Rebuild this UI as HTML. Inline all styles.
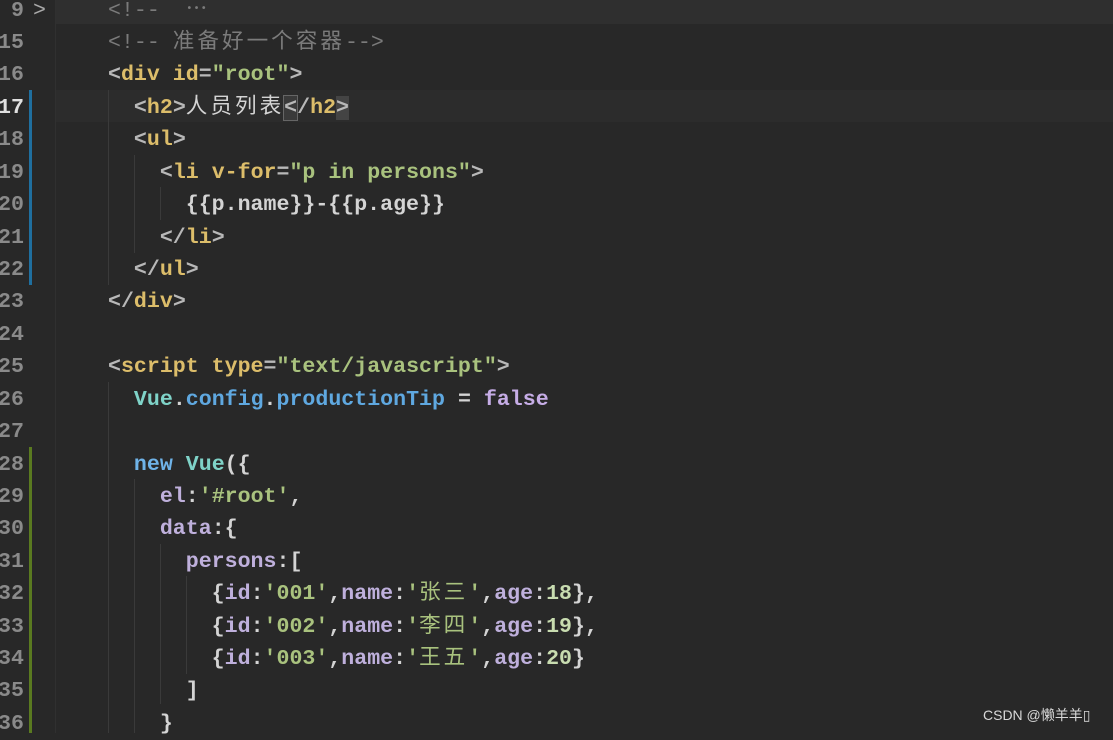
<!DOCTYPE html>
<html><head><meta charset="utf-8"><style>
body{margin:0;width:1113px;height:733px;background:#282828;overflow:hidden;position:relative;font-family:"Liberation Mono","Noto Sans CJK SC",monospace;font-size:21.6px;font-weight:bold;}
.l{position:absolute;left:0;height:32px;line-height:32px;white-space:pre;color:#d4d4d4;margin-top:2px}
.n{position:absolute;width:24px;text-align:right;color:#8a8a8a;}
.t{position:absolute;left:108px;}
.p{color:#b8b8b8}.g{color:#dcbd6a}.s{color:#a9c27e}.c{color:#7b7b7b;font-weight:normal}
.k{color:#6fb3e8}.v{color:#7fd3c8}.b{color:#5fa8e0}.f{color:#c6ade6}.pr{color:#bfb0dc}.num{color:#c8dcb0}
.z{letter-spacing:3px;font-weight:normal}
.hl{position:absolute;left:55px;right:0;background:#2f2f2f}
.ig{position:absolute;width:1px;background:#3a3a3a}
</style></head><body>
<div class="hl" style="top:-7px;height:31px"></div>
<div class="hl" style="top:90px;height:32px;background:#2c2c2c"></div>
<div style="position:absolute;left:29px;top:90px;width:3px;height:195px;background:#1f6f9f"></div>
<div style="position:absolute;left:29px;top:447px;width:3px;height:286px;background:#5a7a20"></div>
<div class="ig" style="left:55px;top:0;height:733px;background:#303030"></div>
<div class="ig" style="left:108px;top:90px;height:195px"></div>
<div class="ig" style="left:134px;top:155px;height:98px"></div>
<div class="ig" style="left:160px;top:187px;height:33px"></div>
<div class="ig" style="left:108px;top:382px;height:351px"></div>
<div class="ig" style="left:134px;top:479px;height:254px"></div>
<div class="ig" style="left:160px;top:544px;height:160px"></div>
<div class="ig" style="left:186px;top:576px;height:98px"></div>

<div class="l" style="top:-7px"><span class="n" style="left:0">9</span><span class="n" style="left:22px;color:#aaa;font-weight:normal">&gt;</span><span class="t c">&lt;!--  ⋯</span></div>
<div class="l" style="top:25px"><span class="n" style="left:-2px">15</span><span class="t c">&lt;!-- <span class="z">准备好一个容器</span>--&gt;</span></div>
<div class="l" style="top:57px"><span class="n" style="left:-2px">16</span><span class="t"><span class="p">&lt;</span><span class="g">div id</span><span class="p">=</span><span class="s">"root"</span><span class="p">&gt;</span></span></div>
<div class="l" style="top:90px"><span class="n" style="left:-2px;color:#e0e0e0">17</span><span class="t">  <span class="p">&lt;</span><span class="g">h2</span><span class="p">&gt;</span><span class="z">人员列表</span><span class="p" style="outline:1px solid #666;background:#3a3a3a">&lt;</span><span class="p">/</span><span class="g">h2</span><span class="p" style="background:#444">&gt;</span></span></div>
<div class="l" style="top:122px"><span class="n" style="left:-2px">18</span><span class="t">  <span class="p">&lt;</span><span class="g">ul</span><span class="p">&gt;</span></span></div>
<div class="l" style="top:155px"><span class="n" style="left:-2px">19</span><span class="t">    <span class="p">&lt;</span><span class="g">li v-for</span><span class="p">=</span><span class="s">"p in persons"</span><span class="p">&gt;</span></span></div>
<div class="l" style="top:187px"><span class="n" style="left:-2px">20</span><span class="t">      {{p.name}}-{{p.age}}</span></div>
<div class="l" style="top:220px"><span class="n" style="left:-2px">21</span><span class="t">    <span class="p">&lt;/</span><span class="g">li</span><span class="p">&gt;</span></span></div>
<div class="l" style="top:252px"><span class="n" style="left:-2px">22</span><span class="t">  <span class="p">&lt;/</span><span class="g">ul</span><span class="p">&gt;</span></span></div>
<div class="l" style="top:284px"><span class="n" style="left:-2px">23</span><span class="t"><span class="p">&lt;/</span><span class="g">div</span><span class="p">&gt;</span></span></div>
<div class="l" style="top:317px"><span class="n" style="left:-2px">24</span></div>
<div class="l" style="top:349px"><span class="n" style="left:-2px">25</span><span class="t"><span class="p">&lt;</span><span class="g">script type</span><span class="p">=</span><span class="s">"text/javascript"</span><span class="p">&gt;</span></span></div>
<div class="l" style="top:382px"><span class="n" style="left:-2px">26</span><span class="t">  <span class="v">Vue</span>.<span class="b">config</span>.<span class="b">productionTip</span> = <span class="f">false</span></span></div>
<div class="l" style="top:414px"><span class="n" style="left:-2px">27</span></div>
<div class="l" style="top:447px"><span class="n" style="left:-2px">28</span><span class="t">  <span class="k">new</span> <span class="v">Vue</span>({</span></div>
<div class="l" style="top:479px"><span class="n" style="left:-2px">29</span><span class="t">    <span class="pr">el</span>:<span class="s">'#root'</span>,</span></div>
<div class="l" style="top:511px"><span class="n" style="left:-2px">30</span><span class="t">    <span class="pr">data</span>:{</span></div>
<div class="l" style="top:544px"><span class="n" style="left:-2px">31</span><span class="t">      <span class="pr">persons</span>:[</span></div>
<div class="l" style="top:576px"><span class="n" style="left:-2px">32</span><span class="t">        {<span class="pr">id</span>:<span class="s">'001'</span>,<span class="pr">name</span>:<span class="s">'<span class="z">张三</span>'</span>,<span class="pr">age</span>:<span class="num">18</span>},</span></div>
<div class="l" style="top:609px"><span class="n" style="left:-2px">33</span><span class="t">        {<span class="pr">id</span>:<span class="s">'002'</span>,<span class="pr">name</span>:<span class="s">'<span class="z">李四</span>'</span>,<span class="pr">age</span>:<span class="num">19</span>},</span></div>
<div class="l" style="top:641px"><span class="n" style="left:-2px">34</span><span class="t">        {<span class="pr">id</span>:<span class="s">'003'</span>,<span class="pr">name</span>:<span class="s">'<span class="z">王五</span>'</span>,<span class="pr">age</span>:<span class="num">20</span>}</span></div>
<div class="l" style="top:673px"><span class="n" style="left:-2px">35</span><span class="t">      ]</span></div>
<div class="l" style="top:706px"><span class="n" style="left:-2px">36</span><span class="t">    }</span></div>
<div style="position:absolute;left:983px;top:705px;font-family:'Liberation Sans','Noto Sans CJK SC',sans-serif;font-size:14px;font-weight:normal;color:#d8d8d8">CSDN @懒羊羊▯</div>
</body></html>
